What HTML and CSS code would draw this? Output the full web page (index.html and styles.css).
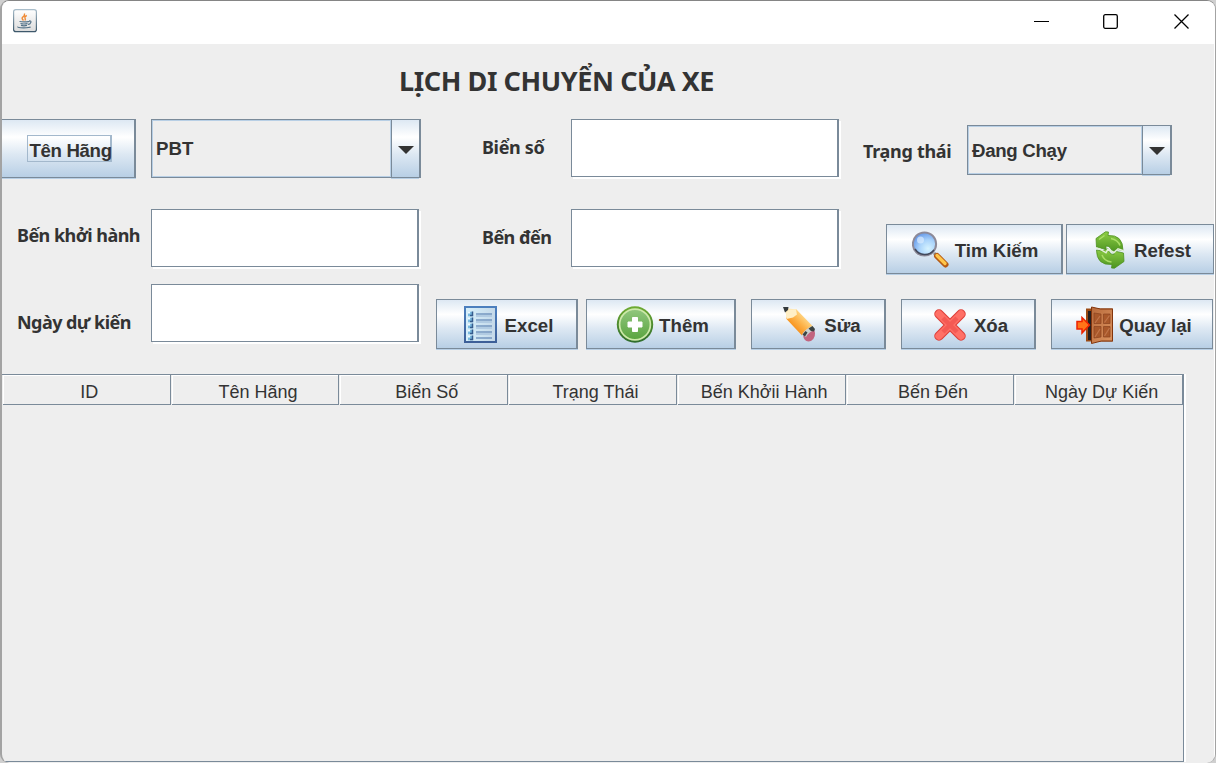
FILE: index.html
```html
<!DOCTYPE html>
<html lang="vi">
<head>
<meta charset="utf-8">
<title>Lịch di chuyển của xe</title>
<link rel="stylesheet" href="styles.css">
</head>
<body>
<div class="window">
  <header class="titlebar">
    <svg class="app-icon" width="24" height="24" viewBox="0 0 24 24">
      <defs>
        <linearGradient id="jb" x1="0" y1="0" x2="0" y2="1"><stop offset="0" stop-color="#a9bdca"/><stop offset="1" stop-color="#3d586b"/></linearGradient>
        <linearGradient id="jf" x1="0" y1="0" x2="0" y2="1"><stop offset="0" stop-color="#fff"/><stop offset="1" stop-color="#dcdcdc"/></linearGradient>
      </defs>
      <rect x=".6" y=".6" width="22.8" height="22" rx="2.2" fill="url(#jf)" stroke="url(#jb)" stroke-width="1.2"/>
      <path d="M11.500 4.500q.5 2-1.500 3.300t.5 3.700M13.800 6.500q-2.500 1.200-1.800 2.500t0 2.500" fill="none" stroke="#f08a35" stroke-width="1.400"/>
      <path d="M6.500 12.500q5 1 10-.2M7.500 14.500q3.500 1 7 0M8 16.400q3 .9 6 0M16 12q2.500-.5 1.800 1.500t-3 1.900M5 17.600q-1 1.200 5.500 1.200t7-1.100" fill="none" stroke="#557389" stroke-width="1.200"/>
    </svg>
    <div class="controls">
      <svg width="16" height="16" viewBox="0 0 16 16"><path d="M0 8.500h15" stroke="#000" stroke-width="1"/></svg>
      <svg width="16" height="16" viewBox="0 0 16 16"><rect x=".7" y="1.700" width="13.600" height="13.600" rx="1.500" fill="none" stroke="#000" stroke-width="1.300"/></svg>
      <svg width="16" height="16" viewBox="0 0 16 16"><path d="M.5 1.500l14 14M14.500 1.500l-14 14" stroke="#000" stroke-width="1.300"/></svg>
    </div>
  </header>
  <main class="content">
    <h1 class="heading"><span>LỊCH DI CHUYỂN CỦA XE</span></h1>

    <div class="row row-top">
      <button class="btn btn-brand"><span class="focus">Tên Hãng</span></button>
      <div class="combo combo-brand"><span class="combo-value">PBT</span><span class="combo-arrow"><svg width="16" height="8" viewBox="0 0 16 8"><path d="M0 0h16l-8 8z" fill="#333"/></svg></span></div>
      <label class="label label-plate"><span>Biển số</span></label>
      <input class="field">
      <label class="label label-status"><span>Trạng thái</span></label>
      <div class="combo combo-status"><span class="combo-value">Đang Chạy</span><span class="combo-arrow"><svg width="16" height="8" viewBox="0 0 16 8"><path d="M0 0h16l-8 8z" fill="#333"/></svg></span></div>
    </div>

    <div class="row row-mid">
      <label class="label label-from"><span>Bến khởi hành</span></label>
      <input class="field">
      <label class="label label-to"><span>Bến đến</span></label>
      <input class="field">
      <button class="btn btn-find">
        <svg width="38" height="38" viewBox="0 0 38 38">
          <defs><radialGradient id="lens" cx=".65" cy=".7" r=".75"><stop offset="0" stop-color="#d6f3ff"/><stop offset=".5" stop-color="#a9d3fb"/><stop offset="1" stop-color="#5f93e6"/></radialGradient></defs>
          <path d="M22 22l5 5" stroke="#888" stroke-width="3"/>
          <path d="M25 25l8.500 8.500" stroke="#b65a13" stroke-width="6" stroke-linecap="round"/>
          <path d="M25 24.500l8 8" stroke="#ffc64a" stroke-width="3.200" stroke-linecap="round"/>
          <circle cx="12.500" cy="13" r="11.600" fill="url(#lens)" stroke="#8d8a98" stroke-width="2"/>
          <path d="M3 18a11.600 11.600 0 0 0 19 1" fill="none" stroke="#42485a" stroke-width="1.500"/>
          <circle cx="8.500" cy="9" r="3.500" fill="#dcecff" opacity=".7"/>
        </svg><span>Tim Kiếm</span>
      </button>
      <button class="btn btn-refresh">
        <svg width="38" height="38" viewBox="0 0 38 38">
          <defs><linearGradient id="gr" x1="0" y1="0" x2="0" y2="1"><stop offset="0" stop-color="#8fce46"/><stop offset="1" stop-color="#4c9420"/></linearGradient></defs>
          <path d="M5 7.500L14.500 .8l3 .2-.5 3.500q15-1 15 15l-5-1-6 2.500q-1-6-6-6v3.500L5.500 16z" fill="url(#gr)" stroke="#4e9221" stroke-width=".8"/>
          <path d="M33 30.500L23.500 37.200l-3-.2.5-3.500q-15.500 1-15.500-14.500l5.500 1 6-2.500q1 6 6 6v-3.500l9.500 2z" fill="url(#gr)" stroke="#4e9221" stroke-width=".8"/>
          <path d="M5.500 17l3.500 1.200 6 3.600 2-3.800 6 3.500 4-3.700 5.500 2" fill="none" stroke="#e2efd9" stroke-width="1.500"/>
          <path d="M8 8.500l5.500-4M20 7.500q7 1.500 9 7M11 24q2 6 9.500 7" fill="none" stroke="#aade66" stroke-width="1.500"/>
        </svg><span>Refest</span>
      </button>
    </div>

    <div class="row row-actions">
      <label class="label label-date"><span>Ngày dự kiến</span></label>
      <input class="field">
      <button class="btn btn-excel">
        <svg width="38" height="38" viewBox="0 0 38 38">
          <defs><linearGradient id="xl" x1="0" y1="0" x2="1" y2="0"><stop offset="0" stop-color="#d7f0fb"/><stop offset="1" stop-color="#c4d8e8"/></linearGradient>
          <linearGradient id="xb" x1="0" y1="0" x2="0" y2="1"><stop offset="0" stop-color="#4c7fbe"/><stop offset="1" stop-color="#3d5f98"/></linearGradient></defs>
          <rect x="3" y="1" width="31" height="35" fill="url(#xl)" stroke="url(#xb)" stroke-width="2"/>
          <path d="M14 8h16M14 14h16M14 20h16M14 26h16M14 32h16" stroke="#4b73a8" stroke-width="1.200"/>
          <path d="M14 10h16M14 16h16M14 22h16M14 28h16" stroke="#b1cbe2" stroke-width="1.800"/>
          <path d="M6 8h5M6 14h5M6 20h5M6 26h5M6 32h5" stroke="#79b9df" stroke-width="4.500"/>
          <path d="M8 9.500h2.500v-4M8 15.500h2.500v-4M8 21.500h2.500v-4M8 27.500h2.500v-4M8 33.500h2.500v-4" fill="none" stroke="#355b8c" stroke-width="1.500"/>
          <path d="M6 6.500h2M6 12.500h2M6 18.500h2M6 24.500h2M6 30.500h2" stroke="#eefaff" stroke-width="2"/>
        </svg><span>Excel</span>
      </button>
      <button class="btn btn-add">
        <svg width="38" height="38" viewBox="0 0 38 38">
          <defs><linearGradient id="ad" x1="0" y1="0" x2="0" y2="1"><stop offset="0" stop-color="#6fac32"/><stop offset="1" stop-color="#2e6b2c"/></linearGradient>
          <linearGradient id="ai" x1="0" y1="0" x2="0" y2="1"><stop offset="0" stop-color="#91c77e"/><stop offset="1" stop-color="#5aa43f"/></linearGradient></defs>
          <circle cx="19" cy="18.500" r="18.200" fill="url(#ad)"/>
          <circle cx="19" cy="18.500" r="15.400" fill="url(#ai)" stroke="#cde9a9" stroke-width="1.700"/>
          <path d="M16.500 11.500h5v4.500h4.500v5h-4.500v4.500h-5v-4.500h-4.500v-5h4.500z" fill="#fff" stroke="#fff" stroke-linejoin="round"/>
        </svg><span>Thêm</span>
      </button>
      <button class="btn btn-edit">
        <svg width="38" height="38" viewBox="0 0 38 38">
          <defs><linearGradient id="pc" x1="0" y1="1" x2="1" y2="0"><stop offset=".3" stop-color="#f7931f"/><stop offset=".5" stop-color="#fdb248"/><stop offset=".75" stop-color="#ffdc8f"/></linearGradient></defs>
          <path d="M22 29q1 8 8 6 6-4 3-12z" fill="#c2657f"/>
          <path d="M3 2l13 1.500-9 10z" fill="#ffe8b5"/>
          <path d="M2 1h5.500l-.5 3-3 2.500z" fill="#333a3d"/>
          <path d="M5 12.500q2-8 10.500-9L32 20.500q-7 1.500-11 9z" fill="url(#pc)"/>
          <path d="M4.800 7L8 4l7-.5 1 5-4 3-6.500 1.500z" fill="#ffefc6"/>
          <path d="M21 28.500q4-6 10-8.500l3 4q-6 1.500-9 7z" fill="#c9d0ce"/>
          <path d="M21.500 28.500l3-3.500 2 1.500-2.500 4zM27.500 22.500l4-2.500 2.500 3-1 2.500-3-.5z" fill="#3b4444"/>
        </svg><span>Sửa</span>
      </button>
      <button class="btn btn-delete">
        <svg width="38" height="38" viewBox="0 0 38 38">
          <path d="M8 8l22 22M30 8L8 30" stroke="#dd3e38" stroke-width="9.500" stroke-linecap="round"/>
          <path d="M8 8l22 22M30 8L8 30" stroke="#ff7066" stroke-width="7.400" stroke-linecap="round"/>
          <path d="M12 12l14 14M26 12L12 26" stroke="#f45a54" stroke-width="4.500"/>
        </svg><span>Xóa</span>
      </button>
      <button class="btn btn-back">
        <svg width="38" height="38" viewBox="0 0 38 38">
          <defs><linearGradient id="dr" x1="0" y1="0" x2="1" y2="1"><stop offset="0" stop-color="#b86a3b"/><stop offset="1" stop-color="#dc9460"/></linearGradient></defs>
          <path d="M10 2.500h27v33H10z" fill="#9a4a14"/>
          <path d="M12 5h4v29h-4z" fill="#242020"/>
          <path d="M15.500 1l9 2h12v32h-11l-10 2.500z" fill="url(#dr)" stroke="#83360e"/>
          <path d="M18 7l7 1v9.500h-7zM27.500 8H34v9.500h-6.500zM18 20.500h7v10.500l-7 1zM27.500 20.500H34V31h-6.500z" fill="#a9582a" stroke="#8a4420" stroke-width=".7"/>
          <path d="M19 17l5-7M28.500 16.500l5-7M19 31l5-8M28.500 30l5-8" stroke="#c0754a" stroke-width="1.200"/>
          <path d="M1 15.500h5v-4l7.500 7.500-7.500 8v-4H1z" fill="#ff7417" stroke="#ed2200" stroke-width="1.500"/>
        </svg><span>Quay lại</span>
      </button>
    </div>

    <div class="table">
      <div class="thead">
        <div class="th">ID</div>
        <div class="th">Tên Hãng</div>
        <div class="th">Biển Số</div>
        <div class="th">Trạng Thái</div>
        <div class="th">Bến Khởii Hành</div>
        <div class="th">Bến Đến</div>
        <div class="th">Ngày Dự Kiến</div>
      </div>
    </div>
  </main>
</div>
</body>
</html>
```
FILE: styles.css
```css
* { box-sizing: border-box; }
body {
  margin: 0;
  width: 1216px;
  height: 763px;
  overflow: hidden;
  background: #d0d0d0;
  color: #333;
  font: bold 18.67px/22px "Liberation Sans", Arial, sans-serif;
}
.window {
  width: 1216px;
  height: 763px;
  border: solid #a3a3a3;
  border-width: 1px 1px 0 2px;
  border-top-color: #858585;
  border-radius: 9px;
  background: #eee;
  overflow: hidden;
}
.titlebar {
  height: 43px;
  padding: 8px 25px 0 11px;
  display: flex;
  justify-content: space-between;
  background: #fff;
}
.controls { display: flex; padding-top: 4px; }
.controls svg + svg { margin-left: 53px; }
.controls svg:last-child { margin-left: 55px; }
.content { height: 719px; border-right: 1px solid #fff; }
.heading {
  margin: 0;
  height: 75px;
  padding: 19px 0 0 397px;
  font: bold 27px/36px "Noto Sans", "Open Sans", sans-serif;
  letter-spacing: -0.41px;
  white-space: nowrap;
}
.row { display: flex; align-items: flex-start; }
.row-top { height: 90px; }
.row-mid { height: 75px; }
.row-actions { height: 90px; }
.row > * { flex: none; }

.btn {
  height: 50px;
  margin: 15px 0 0;
  padding: 1px 0 0 2px;
  display: flex;
  align-items: center;
  justify-content: center;
  gap: 5px;
  border: 1px solid #7a8a99;
  border-right-width: 2px;
  box-shadow: 0 1px #b8cfe5;
  background: linear-gradient(#dde8f3, #fff 30%, #dde8f3 60%, #b8cfe5);
  color: #333;
  font: inherit;
  white-space: nowrap;
}
.btn svg { flex: none; }
.btn span { padding-top: 2px; }
.btn-brand { width: 134px; height: 59px; margin: 0; padding: 0 0 0 2px; border-left: 0; }
.btn .focus {
  width: 85px;
  height: 27px;
  padding: 4px 0 0 2px;
  border: 1px solid #a3b8cc;
  border-right-width: 2px;
  letter-spacing: -0.35px;
  text-align: left;
}
.btn-find { width: 177px; margin-left: 47px; }
.btn-refresh { width: 148px; margin-left: 3px; border-right-width: 1px; }
.btn-excel { width: 142px; margin-left: 17px; }
.btn-add { width: 150px; margin-left: 8px; padding-left: 4px; }
.btn-edit { width: 135px; margin-left: 15px; padding-left: 6px; }
.btn-delete { width: 135px; margin-left: 15px; padding-left: 3px; }
.btn-back { width: 162px; margin-left: 15px; padding-left: 4px; border-right-width: 1px; }

.combo { display: flex; border: 1px solid #7a8a99; border-right-width: 2px; }
.combo-value {
  flex: 1;
  padding-left: 3px;
  display: flex;
  align-items: center;
  border: 1px solid #b8cfe5;
}
.combo-arrow {
  width: 28px;
  padding: 2px 0 0 1px;
  display: flex;
  align-items: center;
  justify-content: center;
  border-left: 1px solid #7a8a99;
  box-shadow: 0 1px #7a8a99, 0 2px #b8cfe5;
  background: linear-gradient(#dde8f3, #fff 30%, #dde8f3 60%, #b8cfe5);
}
.combo-brand { width: 270px; height: 59px; margin-left: 15px; }
.combo-status { width: 205px; height: 50px; margin-top: 6px; }
.combo-status .combo-value { padding-top: 2px; letter-spacing: -0.3px; }

.field {
  width: 268px;
  height: 58px;
  padding: 0;
  border: 1px solid #7a8a99;
  border-right-width: 2px;
  border-radius: 0;
  box-shadow: 2px 2px #fff;
  background: #fff;
  outline: none;
}
.label {
  font: bold 18px/26px "Noto Sans", "Open Sans", sans-serif;
  letter-spacing: -0.55px;
  white-space: nowrap;
}
.label-plate { width: 89px; margin: 15px 0 0 61px; letter-spacing: -0.35px; }
.label-status { width: 104px; margin: 19px 0 0 24px; letter-spacing: -0.3px; }
.label-from { width: 134px; margin: 13px 0 0 15px; }
.label-to { width: 89px; margin: 15px 0 0 63px; }
.label-date { width: 134px; margin: 25px 0 0 15px; }

.table {
  width: 1182px;
  height: 388px;
  border: solid #7a8a99;
  border-width: 1px 1px 1px 0;
  box-shadow: 2px 0 #fff;
}
.thead { display: grid; grid-template-columns: repeat(7, 1fr); }
.th {
  height: 30px;
  margin-left: 1px;
  padding: 6px 0 0 6px;
  border: solid #7a8a99;
  border-width: 0 1px 1px 0;
  box-shadow: inset 1px 1px #fff;
  font-weight: normal;
  font-size: 18px;
  text-align: center;
  white-space: nowrap;
}
```
